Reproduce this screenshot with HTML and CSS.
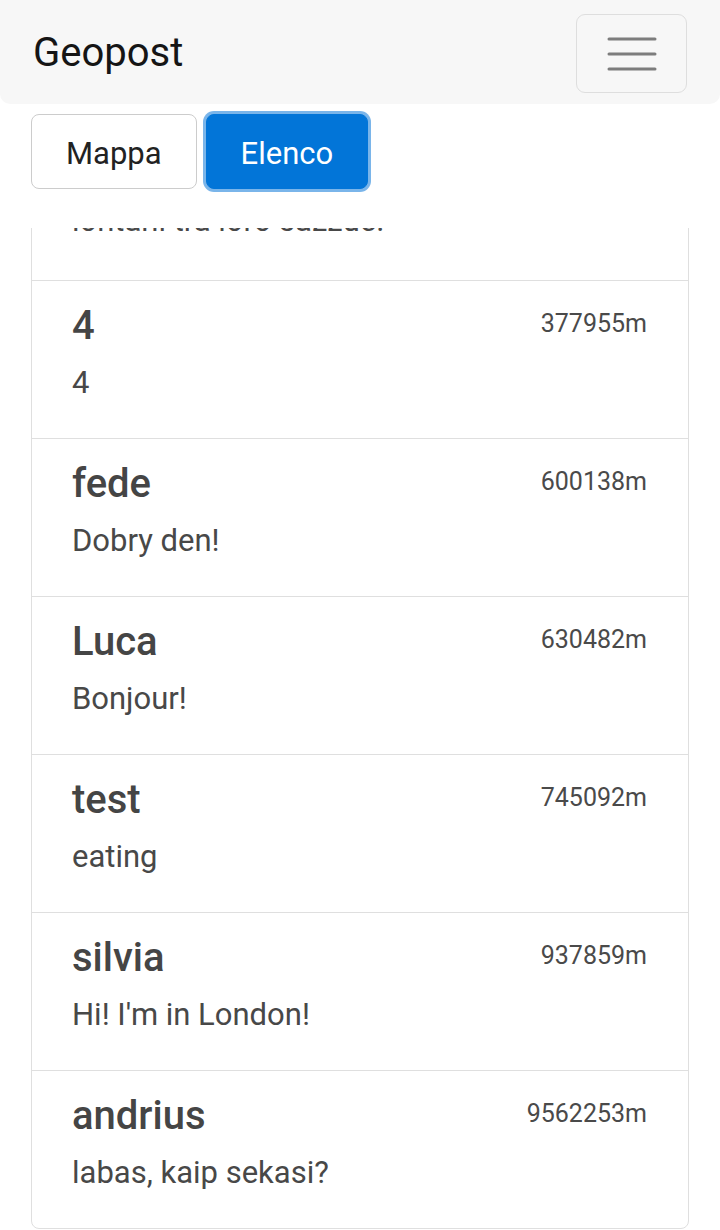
FILE: index.html
```html
<!DOCTYPE html>
<html lang="it">
<head>
<meta charset="utf-8">
<title>Geopost</title>
<link rel="stylesheet" href="styles.css">
</head>
<body>
<header class="topbar">
  <nav class="navbar">
    <span class="brand">Geopost</span>
    <button class="toggler" type="button" aria-label="Menu">
      <svg class="toggler-icon" width="50" height="34" viewBox="0 0 50 34">
        <path d="M2 2H48M2 17H48M2 32H48" stroke="#7d7d7d" stroke-width="3" stroke-linecap="round" fill="none"/>
      </svg>
    </button>
  </nav>
  <div class="view-switch">
    <button class="btn btn-light" type="button">Mappa</button>
    <button class="btn btn-primary" type="button">Elenco</button>
  </div>
</header>
<main class="list-viewport">
  <ul class="post-list">
    <li class="post partial">
      <p class="post-text">lontani tra loro sazzue.</p>
    </li>
    <li class="post">
      <div class="post-head"><h5 class="post-user">4</h5><small class="post-dist">377955m</small></div>
      <p class="post-text">4</p>
    </li>
    <li class="post">
      <div class="post-head"><h5 class="post-user">fede</h5><small class="post-dist">600138m</small></div>
      <p class="post-text">Dobry den!</p>
    </li>
    <li class="post">
      <div class="post-head"><h5 class="post-user">Luca</h5><small class="post-dist">630482m</small></div>
      <p class="post-text">Bonjour!</p>
    </li>
    <li class="post">
      <div class="post-head"><h5 class="post-user">test</h5><small class="post-dist">745092m</small></div>
      <p class="post-text">eating</p>
    </li>
    <li class="post">
      <div class="post-head"><h5 class="post-user">silvia</h5><small class="post-dist">937859m</small></div>
      <p class="post-text">Hi! I'm in London!</p>
    </li>
    <li class="post">
      <div class="post-head"><h5 class="post-user">andrius</h5><small class="post-dist">9562253m</small></div>
      <p class="post-text">labas, kaip sekasi?</p>
    </li>
  </ul>
</main>
</body>
</html>
```
FILE: styles.css
```css
html, body {
  margin: 0;
  padding: 0;
  background: #ffffff;
}
body {
  width: 720px;
  height: 1230px;
  overflow: hidden;
  font-family: Roboto, "Liberation Sans", sans-serif;
  color: #464646;
}
.topbar {
  display: flex;
  flex-direction: column;
}
.navbar {
  height: 104px;
  box-sizing: border-box;
  padding: 14px 33px 11px 33px;
  background: #f7f7f7;
  border-radius: 0 0 10px 10px;
  display: flex;
  align-items: center;
  justify-content: space-between;
}
.brand {
  font-size: 40px;
  line-height: 48px;
  color: #151515;
  padding-bottom: 2px;
}
.toggler {
  width: 111px;
  height: 79px;
  box-sizing: border-box;
  border: 1px solid #dedede;
  border-radius: 9px;
  background: transparent;
  padding: 0;
  display: flex;
  align-items: center;
  justify-content: center;
}
.toggler-icon {
  display: block;
}
.view-switch {
  display: flex;
  gap: 9px;
  padding: 10px 0 0 31px;
  height: 75px;
}
.btn {
  height: 75px;
  box-sizing: border-box;
  padding: 0 34px;
  border-radius: 8px;
  font-family: Roboto, "Liberation Sans", sans-serif;
  font-size: 31px;
  line-height: 73px;
  padding-top: 2px;
}
.btn-light {
  background: #ffffff;
  border: 1px solid #cccccc;
  color: #222222;
}
.btn-primary {
  background: #0275d8;
  border: 1px solid #0275d8;
  color: #ffffff;
  box-shadow: 0 0 0 3px #7ab5ea;
}
.list-viewport {
  margin-top: 39px;
  height: 1002px;
  overflow: hidden;
}
.post-list {
  list-style: none;
  margin: -31px 31px 0 31px;
  padding: 0;
  border: 1px solid #dfdfdf;
  border-radius: 8px;
  background: #ffffff;
}
.post {
  padding: 21px 41px 32px 40px;
  border-top: 1px solid #dfdfdf;
}
.post.partial {
  padding-top: 0;
  padding-bottom: 36px;
  border-top: 0;
}
.post-head {
  display: flex;
  justify-content: space-between;
  align-items: flex-start;
  margin-bottom: 10px;
}
.post-user {
  margin: 0;
  font-size: 40px;
  line-height: 48px;
  font-weight: 500;
  color: #454545;
}
.post-dist {
  margin-top: 3px;
  font-size: 25px;
  line-height: 37px;
  color: #4a4a4a;
}
.post-text {
  margin: 0;
  font-size: 31px;
  line-height: 46px;
  color: #484848;
}
```
